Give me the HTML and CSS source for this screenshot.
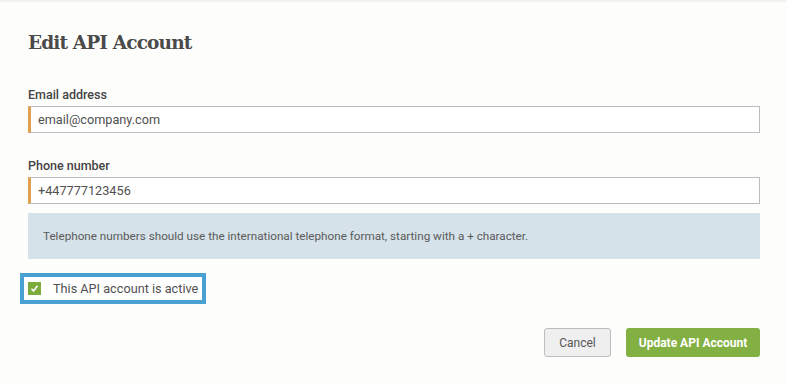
FILE: index.html
```html
<!DOCTYPE html>
<html lang="en">
<head>
    <meta charset="UTF-8">
    <meta name="viewport" content="width=device-width, initial-scale=1.0">
    <title>Edit API Account</title>
    <link rel="stylesheet" href="styles.css">
</head>
<body>
    <div class="modal">
        <h1>Edit API Account</h1>
        <form class="account-form">
            <label for="email">Email address</label>
            <input type="email" id="email" name="email" value="email@company.com">

            <label for="phone">Phone number</label>
            <input type="text" id="phone" name="phone" value="+447777123456">

            <div class="info-box">Telephone numbers should use the international telephone format, starting with a + character.</div>

            <div class="check-row">
                <label class="check-label">
                    <span class="checkbox">
                        <svg width="9" height="9" viewBox="0 0 9 9"><path d="M1.5 4.8 L3.6 7 L7.5 1.8" fill="none" stroke="#fff" stroke-width="1.6"/></svg>
                    </span>
                    This API account is active
                </label>
            </div>

            <div class="actions">
                <button type="button" class="btn-cancel">Cancel</button>
                <button type="submit" class="btn-primary">Update API Account</button>
            </div>
        </form>
    </div>
</body>
</html>
```

FILE: styles.css
```css
body {
    font-family: Roboto, Arial, sans-serif;
    background-color: #fdfdfc;
    margin: 0;
    padding: 0;
    color: #444;
    border-top: 2px solid #f1f1f1;
}

.modal {
    padding: 29px 26px 0 28px;
}

h1 {
    font-family: "DejaVu Serif", Georgia, serif;
    font-size: 18.5px;
    font-weight: bold;
    color: #4a4a4a;
    margin: 0 0 32px;
    letter-spacing: -0.85px;
    line-height: 24px;
}

.account-form {
    display: flex;
    flex-direction: column;
}

.account-form > label {
    font-size: 12.5px;
    font-weight: 500;
    color: #444;
    margin-bottom: 4px;
    line-height: 15px;
}

input {
    height: 27px;
    box-sizing: border-box;
    padding: 0 7px;
    border: 1px solid #bcbcbc;
    border-left: 3px solid #e2a04f;
    background: #fff;
    font-family: Roboto, Arial, sans-serif;
    font-size: 12.7px;
    color: #505050;
    margin-bottom: 25px;
}

#phone {
    margin-bottom: 9px;
}

.info-box {
    background-color: #d5e2e9;
    color: #5a5a5a;
    font-size: 11.7px;
    padding: 0 15px;
    height: 46px;
    display: flex;
    align-items: center;
}

.check-row {
    margin: 14px 0 0 -8px;
    display: flex;
}

.check-label {
    display: flex;
    align-items: center;
    gap: 12px;
    border: 4px solid #4a9fd3;
    background: #fff;
    padding: 0 4px;
    height: 23px;
    font-size: 12.7px;
    color: #505050;
}

.checkbox {
    width: 13px;
    height: 13px;
    background-color: #7cac3c;
    display: flex;
    align-items: center;
    justify-content: center;
}

.actions {
    display: flex;
    justify-content: flex-end;
    gap: 15px;
    margin-top: 24px;
}

button {
    height: 29px;
    border-radius: 3px;
    font-family: Roboto, Arial, sans-serif;
    font-size: 12px;
    cursor: pointer;
}

.btn-cancel {
    width: 67px;
    background-color: #efefef;
    border: 1px solid #bdbdbd;
    color: #555;
}

.btn-primary {
    width: 134px;
    background-color: #83b043;
    border: none;
    color: #fff;
    font-weight: bold;
}
```
